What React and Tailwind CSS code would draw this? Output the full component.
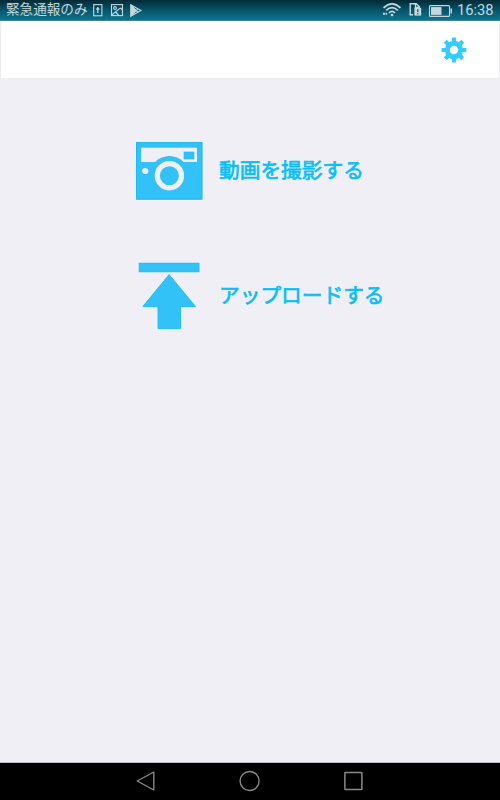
const GEAR_ANGLES = [0, 45, 90, 135, 180, 225, 270, 315];

function StatusBar() {
  return (
    <div className="flex h-[21px] shrink-0 items-start border-b border-[#3f819b] bg-linear-to-b from-[#032a36] via-[#075468] to-[#0a7590] pl-[6px] text-[#c3d8de]">
      <span className="w-[82px] whitespace-nowrap font-[Roboto,'Noto_Sans_CJK_JP',sans-serif] text-[13.6px] leading-[18px]">緊急通報のみ</span>

      {/* Notification icons */}
      <svg width="60" height="20" viewBox="88 0 60 20" fill="none" stroke="currentColor" strokeWidth="1.1">
        <rect x="93.7" y="4.6" width="8.2" height="11.2" />
        <path d="M97.8 7v6M96.2 9h3.2" strokeWidth="1.3" />
        <rect x="111.5" y="4.6" width="11" height="11" />
        <circle cx="115" cy="8" r="1.4" />
        <path d="M112 14.7l8.5-6.8M115.5 12l3 3M120.5 8l2 2" />
        <path d="M130.7 4.8v11.4l10.2-5.6z" />
        <path d="M131.5 6v9l4.3-4.5z" fill="currentColor" />
        <path d="M131 5.2l7 7.1M131 15.9l7-7" />
      </svg>

      <div className="flex-1" />

      {/* Wi-Fi, SIM and battery */}
      <svg width="75" height="20" viewBox="380 0 75 20" fill="none" stroke="currentColor">
        <path d="M383.5 7.8q8.5-8 17 0M386.2 10.3q5.8-5.4 11.6 0M389 12.8q3-2.8 6 0" strokeWidth="1.7" />
        <circle cx="392" cy="15" r="1.3" fill="currentColor" stroke="none" />
        <path d="M383 13.8h2.4M386 13.8h1.2" strokeWidth="2" />
        <path d="M413 14.8h-2.8v-11h6l3.6 3.5M415.5 4v3.5h4.5" strokeWidth="1.4" />
        <rect x="414.4" y="7.8" width="6.8" height="7.8" fill="currentColor" stroke="none" />
        <path d="M417.8 9.3v2.8M417.8 13v1.3" stroke="#075468" strokeWidth="1.2" />
        <rect x="429.5" y="5.6" width="20" height="10.8" rx="1" strokeWidth="1.1" />
        <rect x="431" y="7.1" width="10.5" height="7.8" fill="currentColor" stroke="none" />
        <path d="M451.2 8.5v5" strokeWidth="1.5" />
      </svg>
      <span className="w-[45px] pl-[2px] font-[Roboto,sans-serif] text-[14.7px] leading-[21px]">16:38</span>
    </div>
  );
}

function GearIcon() {
  return (
    <svg width="26" height="26" viewBox="-13 -13 26 26" fill="#32cdfb">
      {GEAR_ANGLES.map((a) => (
        <rect key={a} x="-2.1" y="-12.4" width="4.2" height="6" rx="0.4" transform={`rotate(${a})`} />
      ))}
      <circle r="6.7" fill="none" stroke="#32cdfb" strokeWidth="4.9" />
    </svg>
  );
}

function CameraIcon() {
  return (
    <svg width="67" height="58" viewBox="0 0 67 58" fill="#33c2f8">
      <rect width="66.4" height="57.6" />
      <rect x="0.5" y="0.5" width="65.3" height="56.6" fill="none" stroke="#1abdf3" />
      <rect x="5.2" y="5.7" width="55.8" height="14.3" fill="#f0eff5" />
      <circle cx="33.4" cy="33.7" r="19.8" />
      <rect x="48" y="10" width="10" height="7" stroke="#1abdf3" strokeWidth="0.6" />
      <circle cx="33.4" cy="33.7" r="12.1" fill="none" stroke="#f0eff5" strokeWidth="5.2" />
      <circle cx="9.3" cy="29" r="3.1" fill="#f0eff5" />
    </svg>
  );
}

function UploadIcon() {
  return (
    <svg width="67" height="68" viewBox="0 0 67 68" fill="#33c2f8" stroke="#1abdf3" strokeWidth="0.9">
      <rect x="3.2" y="1.2" width="59.8" height="8.6" />
      <path d="M33.1 12.6L59.6 44.6H44.5V66.6H22V44.6H6.8z" />
    </svg>
  );
}

function MenuButton({ icon, label }) {
  return (
    <button type="button" className="flex items-center gap-4 text-left">
      {icon}
      <span className="whitespace-nowrap pb-[4px] font-['Noto_Sans_CJK_JP',sans-serif] text-[20.7px] leading-[30px] text-[#08bff8] [-webkit-text-stroke:0.7px_#08bff8]">{label}</span>
    </button>
  );
}

function NavBar() {
  return (
    <div className="flex h-[37px] shrink-0 items-center justify-center gap-[83px] bg-black pb-px pr-px">
      <svg width="20" height="22" viewBox="0 0 20 22" fill="none" stroke="#888" strokeWidth="1.4">
        <path d="M17.8 2v18L1.2 11z" strokeLinejoin="round" />
      </svg>
      <svg width="22" height="22" viewBox="0 0 22 22" fill="none" stroke="#888" strokeWidth="1.4">
        <circle cx="10.6" cy="11" r="9.5" />
      </svg>
      <svg width="20" height="22" viewBox="0 0 20 22" fill="none" stroke="#888" strokeWidth="1.5">
        <rect x="0.9" y="2.5" width="17" height="17" rx="0.6" />
      </svg>
    </div>
  );
}

export default function App() {
  return (
    <div className="flex h-[800px] w-[500px] flex-col overflow-hidden bg-[#f0eff5]">
      <StatusBar />
      <header className="flex h-[58px] shrink-0 items-center justify-end border-x border-b border-[#ecebef] bg-white pr-8">
        <button type="button" aria-label="設定">
          <GearIcon />
        </button>
      </header>
      <main className="flex flex-1 flex-col items-start gap-[62px] border-b border-[#bdbcc4] pl-[136px] pt-[63px]">
        <MenuButton icon={<CameraIcon />} label="動画を撮影する" />
        <MenuButton icon={<UploadIcon />} label="アップロードする" />
      </main>
      <NavBar />
    </div>
  );
}
